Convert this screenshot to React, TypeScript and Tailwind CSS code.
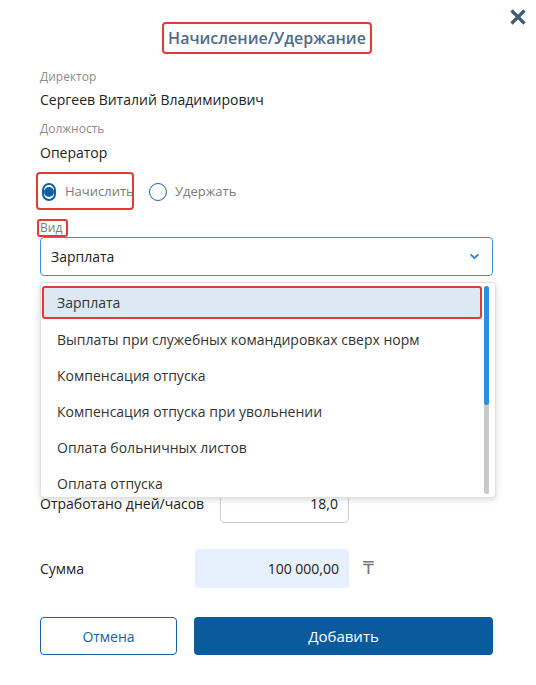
import { useState } from 'react';

const kinds = [
  'Зарплата',
  'Выплаты при служебных командировках сверх норм',
  'Компенсация отпуска',
  'Компенсация отпуска при увольнении',
  'Оплата больничных листов',
  'Оплата отпуска',
];

export default function App() {
  const [mode, setMode] = useState<'add' | 'hold'>('add');
  const [kind] = useState('Зарплата');

  return (
    <div className="relative w-[536px] h-[685px] bg-white font-['Open_Sans',sans-serif] text-[#222]">
      {/* close */}
      <button className="absolute top-[8px] right-[9px] w-[18px] h-[18px] text-[#3f5b75]">
        <svg viewBox="0 0 18 18" className="w-full h-full">
          <path d="M2.5 2.5 L15.5 15.5 M15.5 2.5 L2.5 15.5" stroke="currentColor" strokeWidth="3.2" strokeLinecap="butt" />
        </svg>
      </button>

      <div className="pl-[40px] pr-[43px] pt-[22px]">
        <div className="flex justify-center">
          <h1 className="h-[32px] w-[210px] ml-[1px] flex items-center justify-center border-2 border-[#e53935] rounded-[4px] text-[16px] font-semibold text-[#4f6c88]">
            Начисление/Удержание
          </h1>
        </div>

        {/* Info */}
        <div className="mt-[15px] text-[12px] leading-[16px] text-[#8c8c8c]">Директор</div>
        <div className="mt-[5px] text-[14px] leading-[20px]">Сергеев Виталий Владимирович</div>
        <div className="mt-[11px] text-[12px] leading-[16px] text-[#8c8c8c]">Должность</div>
        <div className="mt-[6px] text-[14px] leading-[20px]">Оператор</div>

        {/* Radios */}
        <div className="mt-[9px] flex items-center h-[38px]">
          <label
            onClick={() => setMode('add')}
            className="-ml-[4px] h-[38px] w-[98px] flex items-center gap-[9px] pl-[4px] pt-[2px] border-2 border-[#e53935] rounded-[4px] cursor-pointer"
          >
            <span className="w-[18px] h-[18px] rounded-full border-2 border-[#0f5fa3] flex items-center justify-center">
              {mode === 'add' && <span className="w-[10px] h-[10px] rounded-full bg-[#0f5fa3]" />}
            </span>
            <span className="text-[13px] text-[#7b7b7b]">Начислить</span>
          </label>
          <label onClick={() => setMode('hold')} className="ml-[15px] pt-[2px] flex items-center gap-[8px] cursor-pointer">
            <span className="w-[18px] h-[18px] rounded-full border-[1.5px] border-[#1a64a6] flex items-center justify-center">
              {mode === 'hold' && <span className="w-[10px] h-[10px] rounded-full bg-[#0f5fa3]" />}
            </span>
            <span className="text-[13px] text-[#7b7b7b]">Удержать</span>
          </label>
        </div>

        {/* Вид */}
        <div className="mt-[9px] -ml-[3px] w-[31px] h-[18px] border-2 border-[#e53935] rounded-[3px] flex items-center pl-[1px] text-[12px] text-[#7b7b7b]">
          Вид
        </div>
        <div className="relative">
          <div className="h-[39px] border border-[#3d8fdb] rounded-[4px] flex items-center justify-between pl-[10px] pr-[12px]">
            <span className="text-[14px]">{kind}</span>
            <svg viewBox="0 0 12 8" className="w-[11px] h-[7px] text-[#2f86d4]">
              <path d="M1.5 1.5 L6 6 L10.5 1.5" fill="none" stroke="currentColor" strokeWidth="2.2" />
            </svg>
          </div>

          {/* Dropdown */}
          <div className="absolute z-10 left-0 top-[45px] w-[456px] h-[216px] bg-white border border-[#e0e0e0] rounded-[4px] shadow-[0_2px_6px_rgba(0,0,0,0.15)] flex">
            <div className="flex-1 pt-[3px] pl-[1px] overflow-hidden">
              {kinds.map((k, i) =>
                i === 0 ? (
                  <div
                    key={k}
                    className="h-[33px] mb-[2px] flex items-center pl-[13px] text-[14px] text-[#333] bg-[#dce8f4] border-2 border-[#e53935] rounded-[3px]"
                  >
                    {k}
                  </div>
                ) : (
                  <div key={k} className="h-[36px] flex items-center pl-[15px] text-[14px] text-[#333]">
                    {k}
                  </div>
                )
              )}
            </div>
            <div className="w-[5px] mt-[3px] mb-[3px] ml-[2px] mr-[6px] rounded-full bg-[#c9c9c9] flex flex-col">
              <div className="h-[119px] rounded-full bg-[#2e8fdf]" />
            </div>
          </div>
        </div>

        {/* Hidden fields area */}
        <div className="mt-[208px] flex items-center h-[39px]">
          <div className="w-[180px] text-[14px]">Отработано дней/часов</div>
          <div className="w-[129px] h-[39px] border border-[#cfcfcf] rounded-[4px] flex items-center justify-end pr-[10px] text-[14px]">
            18,0
          </div>
        </div>

        <div className="mt-[26px] flex items-center h-[39px]">
          <div className="w-[155px] text-[14px]">Сумма</div>
          <div className="w-[154px] h-[39px] bg-[#e6f1fd] rounded-[4px] flex items-center justify-end pr-[10px] text-[14px]">
            100 000,00
          </div>
          <span className="ml-[14px] text-[17px] text-[#777] font-['DejaVu_Sans',sans-serif]">₸</span>
        </div>

        {/* Buttons */}
        <div className="mt-[29px] flex gap-[17px]">
          <button className="w-[137px] h-[38px] border border-[#1a62a6] rounded-[4px] text-[14px] text-[#1a5e9e]">
            Отмена
          </button>
          <button className="flex-1 h-[38px] bg-[#0a5a9e] rounded-[4px] text-[15px] text-white">
            Добавить
          </button>
        </div>
      </div>
    </div>
  );
}
